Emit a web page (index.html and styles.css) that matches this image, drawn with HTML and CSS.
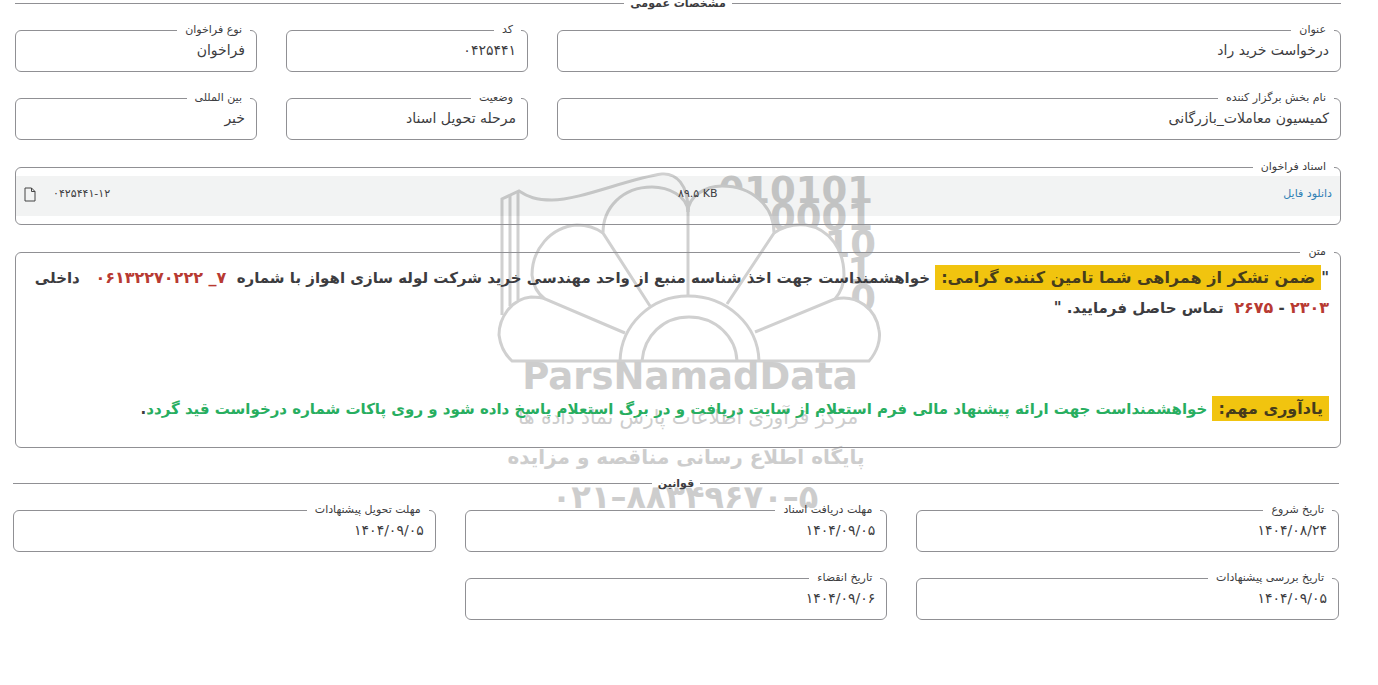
FILE: index.html
```html
<!DOCTYPE html>
<html lang="fa" dir="rtl">
<head>
    <meta charset="UTF-8">
    <meta name="viewport" content="width=device-width, initial-scale=1.0">
    <title>درخواست خرید راد</title>
    <link rel="stylesheet" href="styles.css">
</head>
<body>
    <svg class="watermark" width="390" height="346" viewBox="494 170 390 346" direction="ltr" aria-hidden="true">
        <defs>
            <clipPath id="outside">
                <path d="M690 170V202C694 192 704 186 720 186C752 186 774 206 774 233C784 226 796 224 806 225C830 229 844 250 844 275C844 285 840 293 835 299C846 296 862 301 870 312L884 330V170Z"/>
            </clipPath>
        </defs>
        <g clip-path="url(#outside)" class="digits">
            <text x="873" y="203">010101</text>
            <text x="873" y="230">0001</text>
            <text x="876" y="257">10</text>
            <text x="873" y="284">1</text>
            <text x="876" y="311">0</text>
        </g>
        <g class="petals">
            <path d="M502 315V199L519 191C528 197 536 200 552 200C580 200 630 178 662 174C676 173 688 184 688 210"/>
            <path d="M510 306V196M518 300V192"/>
            <path d="M688 212C688 196 668 187 652 187C622 187 603 208 603 233L650 306"/>
            <path d="M688 212C688 196 706 186 722 186C752 186 774 206 774 233L727 304"/>
            <path class="stem" d="M688 295V208"/>
            <path d="M603 233C596 228 588 225 577 225C550 227 532 250 532 275C533 285 538 294 545 299L625 333"/>
            <path d="M774 233C784 226 796 224 806 225C830 229 844 250 844 275C844 285 840 293 835 299L755 332"/>
            <path d="M545 299C541 297 536 297 531 297C511 299 499 318 499 335Q501 351 512 361H869C877 352 881 340 879 330C876 309 857 294 835 299"/>
            <path d="M620 361C621 325 651 296 688 296C727 296 758 325 759 361"/>
            <path d="M642 361C644 336 663 317 689 317C716 317 736 337 737 361"/>
        </g>
        <text class="brand" x="690" y="389">ParsNamadData</text>
        <text class="script" x="688" y="424" direction="rtl">مرکز فرآوری اطلاعات پارس نماد داده ها</text>
        <text class="tagline" x="686" y="464" direction="rtl">پایگاه اطلاع رسانی مناقصه و مزایده</text>
        <text class="phone" x="685" y="508">۰۲۱–۸۸۳۴۹۶۷۰–۵</text>
    </svg>

    <section class="general">
        <h2 class="section-title">مشخصات عمومی</h2>
        <div class="grid grid-five">
            <fieldset class="field wide">
                <legend>عنوان</legend>
                <div class="value">درخواست خرید راد</div>
            </fieldset>
            <fieldset class="field">
                <legend>کد</legend>
                <div class="value">۰۴۲۵۴۴۱</div>
            </fieldset>
            <fieldset class="field">
                <legend>نوع فراخوان</legend>
                <div class="value">فراخوان</div>
            </fieldset>
            <fieldset class="field wide">
                <legend>نام بخش برگزار کننده</legend>
                <div class="value">کمیسیون معاملات_بازرگانی</div>
            </fieldset>
            <fieldset class="field">
                <legend>وضعیت</legend>
                <div class="value">مرحله تحویل اسناد</div>
            </fieldset>
            <fieldset class="field">
                <legend>بین المللی</legend>
                <div class="value">خیر</div>
            </fieldset>
        </div>

        <fieldset class="field documents">
            <legend>اسناد فراخوان</legend>
            <div class="file-row">
                <div class="file-info">
                    <a href="#">دانلود فایل</a>
                    <span dir="ltr">۸۹.۵ KB</span>
                </div>
                <div class="file-name">
                    <span>۰۴۲۵۴۴۱-۱۲</span>
                    <svg width="12" height="15" viewBox="0 0 12 15" aria-hidden="true">
                        <path d="M1 1H7.500L11 4.500V14H1ZM7.500 1V4.500H11" fill="none" stroke="#444" stroke-width="1"/>
                    </svg>
                </div>
            </div>
        </fieldset>

        <fieldset class="field message">
            <legend>متن</legend>
            <div class="message-body">
                <p>"<mark>ضمن تشکر از همراهی شما تامین کننده گرامی:</mark> خواهشمنداست جهت اخذ شناسه منبع از واحد مهندسی خرید شرکت لوله سازی اهواز با شماره&nbsp; <span class="red">۷_ ۰۶۱۳۲۲۷۰۲۲۲</span>&nbsp;&nbsp; داخلی <span class="red">۲۳۰۳</span> - <span class="red">۲۶۷۵</span>&nbsp; تماس حاصل فرمایید. "</p>
                <p><mark>یادآوری مهم:</mark> <span class="green">خواهشمنداست جهت ارائه پیشنهاد مالی فرم استعلام از سایت دریافت و در برگ استعلام پاسخ داده شود و روی پاکات شماره درخواست قید گردد</span>.</p>
            </div>
        </fieldset>
    </section>

    <section class="rules">
        <h2 class="section-title">قوانین</h2>
        <div class="grid grid-three">
            <fieldset class="field">
                <legend>تاریخ شروع</legend>
                <div class="value">۱۴۰۴/۰۸/۲۴</div>
            </fieldset>
            <fieldset class="field">
                <legend>مهلت دریافت اسناد</legend>
                <div class="value">۱۴۰۴/۰۹/۰۵</div>
            </fieldset>
            <fieldset class="field">
                <legend>مهلت تحویل پیشنهادات</legend>
                <div class="value">۱۴۰۴/۰۹/۰۵</div>
            </fieldset>
            <fieldset class="field">
                <legend>تاریخ بررسی پیشنهادات</legend>
                <div class="value">۱۴۰۴/۰۹/۰۵</div>
            </fieldset>
            <fieldset class="field">
                <legend>تاریخ انقضاء</legend>
                <div class="value">۱۴۰۴/۰۹/۰۶</div>
            </fieldset>
        </div>
    </section>
</body>
</html>
```
FILE: styles.css
```css
body {
  margin: 0;
  position: relative;
  background: #fff;
  color: #3c3c40;
  font-family: "DejaVu Sans", sans-serif;
  font-size: 14px;
}

.general {
  padding: 0 37px 0 15px;
}

.rules {
  padding: 32px 39px 0 13px;
}

.section-title {
  display: flex;
  align-items: center;
  gap: 6px;
  height: 7px;
  margin: 0 0 15px;
  font-size: 11px;
  line-height: 7px;
}

.section-title::before,
.section-title::after {
  content: "";
  flex: 1;
  border-top: 1px solid #909094;
}

.grid {
  display: grid;
  gap: 18px 29px;
}

.grid-five {
  grid-template-columns: repeat(5, 1fr);
}

.grid-three {
  grid-template-columns: repeat(3, 1fr);
}

.wide {
  grid-column: span 3;
}

.field {
  min-width: 0;
  margin: 0;
  padding: 0;
  border: 1px solid #909094;
  border-radius: 6px;
}

.field legend {
  margin: 0 6px;
  padding: 0 8px;
  font-size: 11px;
  line-height: 16px;
}

.value {
  padding: 1px 11px 10px;
  line-height: 22px;
}

.documents {
  margin-top: 19px;
}

.file-row {
  display: grid;
  grid-template-columns: 1fr 1fr;
  margin: 1px 0 8px;
  padding: 8px 8px 12px;
  background: rgba(0, 20, 20, 0.05);
  font-size: 11px;
  line-height: 20px;
}

.file-row a {
  color: #2f80b5;
  text-decoration: none;
}

.file-info {
  display: flex;
  justify-content: space-between;
}

.file-name {
  display: flex;
  justify-content: flex-end;
  align-items: center;
  gap: 17px;
}

.message {
  margin-top: 19px;
}

.message-body {
  padding: 3px 11px 23px;
  font-size: 15px;
  font-weight: bold;
  line-height: 29px;
}

.message-body p {
  margin: 0 0 71px;
}

.message-body p:last-child {
  margin: 0;
}

mark {
  padding: 3px 6px;
  background: #f1c40f;
  color: #463c1c;
  font-size: 16px;
}

.red {
  color: #b83a32;
  font-size: 16px;
}

.green {
  color: #27ae60;
}

.watermark {
  position: absolute;
  top: 170px;
  left: 0;
  right: 0;
  margin: 0 auto;
  z-index: -1;
  fill: #cdcdcd;
}

.watermark text {
  text-anchor: middle;
  font-weight: bold;
}

.petals {
  fill: none;
  stroke: #d0d0d0;
  stroke-width: 3;
}

.watermark .digits text {
  font-size: 37px;
  text-anchor: end;
}

.watermark .brand {
  font-size: 37px;
}

.watermark .script {
  font-size: 20px;
  font-weight: normal;
}

.watermark .tagline {
  font-size: 20px;
}

.watermark .phone {
  font-size: 32px;
}
```
